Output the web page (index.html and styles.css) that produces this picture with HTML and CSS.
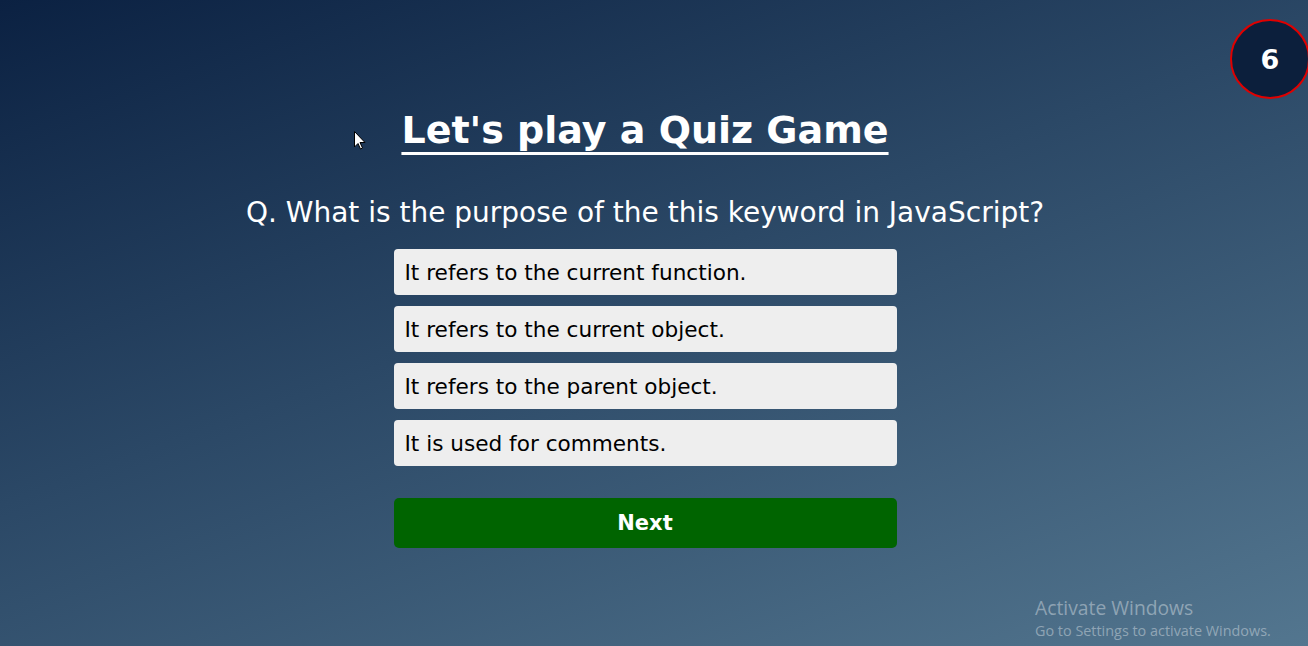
FILE: index.html
```html
<!DOCTYPE html>
<html lang="en">
<head>
<meta charset="utf-8">
<title>Quiz Game</title>
<link rel="stylesheet" href="styles.css">
</head>
<body>
<div class="timer">6</div>
<main class="quiz">
  <h1 class="title">Let's play a Quiz Game</h1>
  <h2 class="question">Q. What is the purpose of the this keyword in JavaScript?</h2>
  <ul class="options">
    <li class="option">It refers to the current function.</li>
    <li class="option">It refers to the current object.</li>
    <li class="option">It refers to the parent object.</li>
    <li class="option">It is used for comments.</li>
  </ul>
  <button class="next">Next</button>
</main>
<svg class="cursor" width="12" height="19" viewBox="0 0 12 19"><path d="M0.5 0.5 L0.5 16 L4 12.5 L6.5 18 L8.5 17 L6 11.5 L11 11.5 Z" fill="#fff" stroke="#000" stroke-width="1"/></svg>
<div class="watermark">
  <div class="wm-title">Activate Windows</div>
  <div class="wm-sub">Go to Settings to activate Windows.</div>
</div>
</body>
</html>
```
FILE: styles.css
```css
html, body {
  margin: 0;
  padding: 0;
  height: 100%;
}
body {
  background: linear-gradient(160deg, #0b2142 0%, #2b4866 45%, #53768f 100%);
  font-family: "DejaVu Sans", Verdana, sans-serif;
  color: #fff;
  overflow: hidden;
  position: relative;
}
.quiz {
  display: flex;
  flex-direction: column;
  align-items: center;
  padding-right: 18px;
  padding-top: 106px;
}
.title {
  margin: 0;
  font-size: 38px;
  font-weight: bold;
  text-decoration: underline;
  text-decoration-skip-ink: none;
  text-underline-offset: 9px;
  text-decoration-thickness: 3px;
  line-height: 48px;
}
.question {
  margin: 40px 0 0;
  font-size: 28px;
  font-weight: normal;
  line-height: 38px;
}
.options {
  list-style: none;
  margin: 17px 0 0;
  padding: 0;
  display: flex;
  flex-direction: column;
  gap: 11px;
  width: 503px;
}
.option {
  background: #eeeeee;
  color: #000;
  border-radius: 4px;
  height: 46px;
  display: flex;
  align-items: center;
  padding: 0 11px;
  font-size: 21.6px;
}
.next {
  margin-top: 32px;
  width: 503px;
  height: 50px;
  border: none;
  border-radius: 5px;
  background: #006400;
  color: #fff;
  font-family: "DejaVu Sans", Verdana, sans-serif;
  font-weight: bold;
  font-size: 21px;
}
.timer {
  position: absolute;
  top: 19px;
  left: 1230px;
  width: 76px;
  height: 76px;
  border: 2px solid #e00000;
  border-radius: 50%;
  background: #0c1f3c;
  color: #fff;
  font-weight: bold;
  font-size: 27px;
  display: flex;
  align-items: center;
  justify-content: center;
}
.cursor {
  position: absolute;
  left: 354px;
  top: 131px;
}
.watermark {
  position: absolute;
  left: 1035px;
  top: 595px;
  font-family: "Open Sans", "Noto Sans", sans-serif;
  color: rgba(255, 255, 255, 0.38);
}
.wm-title {
  font-size: 19.3px;
  line-height: 25px;
}
.wm-sub {
  font-size: 14.4px;
  line-height: 22px;
}
```
